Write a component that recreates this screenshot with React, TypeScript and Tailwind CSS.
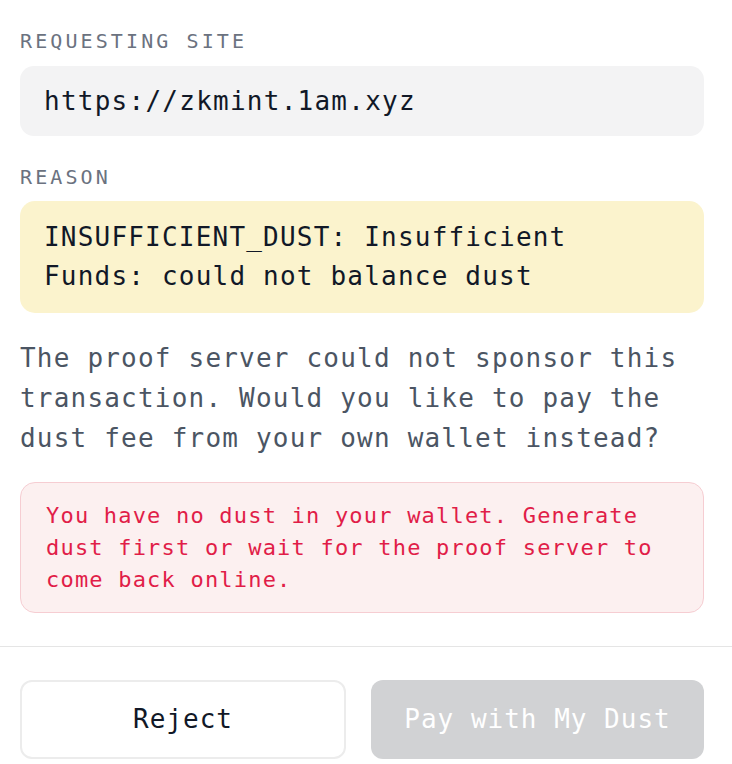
import React from 'react';

const mono = { fontFamily: '"DejaVu Sans Mono", "Liberation Mono", monospace' };

const Label: React.FC<{ children: React.ReactNode }> = ({ children }) => (
  <div className="text-[20px] leading-[28px] tracking-[3.1px] text-[#6b7280]">{children}</div>
);

const App: React.FC = () => {
  return (
    <div className="min-h-screen w-[732px] bg-white" style={mono}>
      <div className="pl-5 pr-7 pt-[27px]">
        <Label>REQUESTING SITE</Label>
        <div className="mt-[11px] rounded-[14px] bg-[#f3f3f4] px-6 py-[17px] text-[26px] leading-[36px] tracking-[1.25px] text-[#111827]">
          https://zkmint.1am.xyz
        </div>

        <div className="mt-[27px]">
          <Label>REASON</Label>
        </div>
        <div className="mt-[10px] rounded-[15px] bg-[#fbf3cd] px-6 py-[17px] text-[26px] leading-[39px] tracking-[1.2px] text-[#111827]">
          INSUFFICIENT_DUST: Insufficient
          <br />
          Funds: could not balance dust
        </div>

        <p className="mt-[25px] text-[26px] leading-[40px] tracking-[1.2px] text-[#4b5563]">
          The proof server could not sponsor this transaction. Would you like to pay the dust fee from your own wallet instead?
        </p>

        <div className="mt-[24px] rounded-[15px] border border-[#f6cdd2] bg-[#fcf0f0] px-[25px] py-[16.5px] text-[22px] leading-[32px] tracking-[1.2px] text-[#e11d48]">
          You have no dust in your wallet. Generate dust first or wait for the proof server to come back online.
        </div>
      </div>

      <div className="mt-[33px] border-t border-[#e5e5e5]" />

      <div className="flex gap-[25px] pl-5 pr-7 pt-[33px] pb-[6px]">
        <button className="h-[79px] w-[326px] rounded-[12px] border-2 border-[#ececec] bg-white text-[26px] tracking-[1px] text-[#111827]">
          Reject
        </button>
        <button className="h-[79px] flex-1 rounded-[12px] bg-[#d1d2d4] text-[26px] tracking-[1px] text-white">
          Pay with My Dust
        </button>
      </div>
    </div>
  );
};

export default App;
